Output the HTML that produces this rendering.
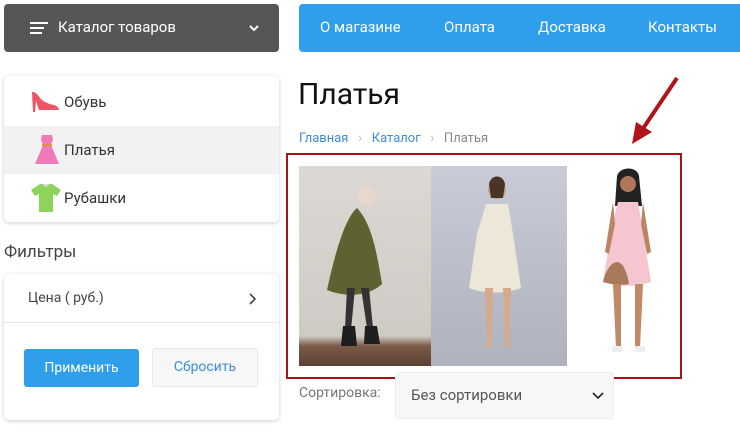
<!DOCTYPE html>
<html><head><meta charset="utf-8"><style>
*{margin:0;padding:0;box-sizing:border-box}
body{width:740px;height:443px;overflow:hidden;background:#fff;font-family:"Roboto","Liberation Sans","DejaVu Sans",sans-serif;position:relative;color:#333}
.a{position:absolute}
.card{background:#fff;border-radius:5px;box-shadow:0 1px 4px rgba(0,0,0,.2)}
</style></head><body>
<div class="a" style="left:4px;top:4px;width:275px;height:48px;background:#555756;border-radius:4px;color:#fff;font-size:15px">
 <div class="a" style="left:26px;top:18px;width:18px;height:2px;background:#fff"></div>
 <div class="a" style="left:26px;top:23px;width:14px;height:2px;background:#fff"></div>
 <div class="a" style="left:26px;top:28px;width:12px;height:2px;background:#fff"></div>
 <div class="a" style="left:54px;top:14px">Каталог товаров</div>
 <svg class="a" style="left:245px;top:20px" width="10" height="8"><path d="M1 2l4 4 4-4" stroke="#fff" stroke-width="2" fill="none"/></svg>
</div>
<div class="a" style="left:299px;top:4px;width:441px;height:48px;background:#2f9fec;border-radius:4px 0 0 4px;color:#fff;font-size:15px">
 <div class="a" style="left:21px;top:14px">О магазине</div>
 <div class="a" style="left:145px;top:14px">Оплата</div>
 <div class="a" style="left:239px;top:14px">Доставка</div>
 <div class="a" style="left:349px;top:14px">Контакты</div>
</div>
<div class="a card" style="left:4px;top:76px;width:275px;height:146px;font-size:15px">
 <div class="a" style="left:0;top:50px;width:275px;height:48px;background:#f2f2f2"></div>
 <svg class="a" style="left:26px;top:14px" width="36" height="24" viewBox="0 0 36 24"><path d="M2 2c3-1 6 3 9 7 3 3 8 5 13 6 3 1 5 3 5 5H9L6 11 5 22H3L2 2z" fill="#ee5565"/></svg>
 <svg class="a" style="left:30px;top:58px" width="26" height="32" viewBox="0 0 26 32"><path d="M8 1h10l1 5-2 5 8 19H1L9 11 7 6z" fill="#f07ab8"/><rect x="8" y="10" width="10" height="2" fill="#e09040"/></svg>
 <svg class="a" style="left:26px;top:106px" width="32" height="32" viewBox="0 0 32 32"><path d="M10 2h12l9 6-4 6-4-2v18H9V12l-4 2-4-6z" fill="#8fd35a"/><path d="M12 2h8l-4 3z" fill="#ddd"/></svg>
 <div class="a" style="left:60px;top:17px">Обувь</div>
 <div class="a" style="left:60px;top:65px">Платья</div>
 <div class="a" style="left:60px;top:113px">Рубашки</div>
</div>
<div class="a" style="left:4px;top:242px;font-size:17px;color:#444">Фильтры</div>
<div class="a card" style="left:4px;top:274px;width:275px;height:146px">
 <div class="a" style="left:24px;top:16px;font-size:14px;color:#444">Цена ( руб.)</div>
 <svg class="a" style="left:245px;top:19px" width="8" height="12"><path d="M1 1l5 5-5 5" stroke="#444" stroke-width="1.6" fill="none"/></svg>
 <div class="a" style="left:0;top:48px;width:275px;height:1px;background:#e6e6e6"></div>
 <div class="a" style="left:20px;top:75px;width:115px;height:38px;background:#2f9fec;border-radius:3px;color:#fff;font-size:14px;text-align:center;line-height:38px">Применить</div>
 <div class="a" style="left:148px;top:74px;width:106px;height:39px;background:#f7f7f7;border:1px solid #e8e8e8;border-radius:3px;color:#3c8ed8;font-size:14px;text-align:center;line-height:37px">Сбросить</div>
</div>
<div class="a" style="left:298px;top:77px;font-size:30px;color:#111">Платья</div>
<div class="a" style="left:299px;top:131px;font-size:13px;color:#888;white-space:nowrap">
 <span style="color:#3c8ed8">Главная</span>&nbsp;&nbsp;&nbsp;<span style="color:#bbb">›</span>&nbsp;&nbsp;&nbsp;<span style="color:#3c8ed8">Каталог</span>&nbsp;&nbsp;&nbsp;<span style="color:#bbb">›</span>&nbsp;&nbsp;&nbsp;Платья</div>
<div class="a" style="left:286px;top:153px;width:396px;height:226px;border:2px solid #a51414"></div>
<svg class="a" style="left:299px;top:166px" width="268" height="200" viewBox="0 0 268 200">
 <defs><linearGradient id="g1" x1="0" y1="0" x2="0" y2="1"><stop offset="0" stop-color="#dcd8d3"/><stop offset=".85" stop-color="#cfcac4"/><stop offset=".9" stop-color="#7a5a48"/><stop offset="1" stop-color="#5c4032"/></linearGradient>
 <linearGradient id="g2" x1="0" y1="0" x2="0" y2="1"><stop offset="0" stop-color="#c9ccd6"/><stop offset="1" stop-color="#aeb2bc"/></linearGradient></defs>
 <rect width="132" height="200" fill="url(#g1)"/>
 <rect x="132" width="136" height="200" fill="url(#g2)"/>
 <circle cx="68" cy="30" r="9" fill="#e8d8cc"/>
 <path d="M58 42c-12 10-22 45-30 82 20 8 42 6 55-6-5-30-10-60-25-76z" fill="#5f6131"/>
 <path d="M48 122l-2 40 6 2 4-42zM62 122l6 40 6 0-4-40z" fill="#333"/>
 <path d="M44 160h12l2 20H42zM66 160h12l3 18H65z" fill="#1e1e1e"/>
 <circle cx="198" cy="24" r="9" fill="#caa088"/><path d="M190 18c2-10 14-10 16 0l-2 14h-12z" fill="#4a3426"/>
 <path d="M187 38h22l5 30 8 54c-15 6-37 6-52 0l8-54z" fill="#ece7d8"/>
 <path d="M186 122h8l-2 60h-4zM204 122h8l-2 60h-4z" fill="#d6aa8c"/>
</svg>
<svg class="a" style="left:595px;top:166px" width="70" height="200" viewBox="0 0 70 200">
 <path d="M22 10c3-10 20-10 22 0l3 30H20z" fill="#222"/>
 <circle cx="33" cy="18" r="8" fill="#b07858"/>
 <path d="M23 36h20l5 30 8 50c-15 5-33 5-48 0l8-50z" fill="#f5c6cf"/>
 <path d="M8 116c2-10 8-20 14-20 6 0 10 10 12 22-10 2-18 0-26-2z" fill="#a97a5a"/>
 <path d="M18 36l-8 50 4 2 6-30zM48 36l8 50-4 2-6-30z" fill="#bc8462"/>
 <path d="M18 118h8l0 64h-5zM40 118h8l-3 64h-5z" fill="#c08a68"/>
 <path d="M17 180h10v6H17zM40 180h10v6H40z" fill="#eee"/>
</svg>
<svg class="a" style="left:622px;top:74px" width="62" height="76"><path d="M55 4L20 56" stroke="#b0141a" stroke-width="4"/><path d="M10 70l4-22 16 10z" fill="#b0141a"/></svg>
<div class="a" style="left:299px;top:385px;font-size:14px;color:#777">Сортировка:</div>
<div class="a" style="left:395px;top:372px;width:219px;height:47px;background:#f7f7f7;border:1px solid #ececec;border-radius:4px">
 <div class="a" style="left:15px;top:13px;font-size:15px;color:#555">Без сортировки</div>
 <svg class="a" style="left:196px;top:19px" width="12" height="8"><path d="M1 1l5 5 5-5" stroke="#222" stroke-width="1.6" fill="none"/></svg>
</div>
</body></html>
